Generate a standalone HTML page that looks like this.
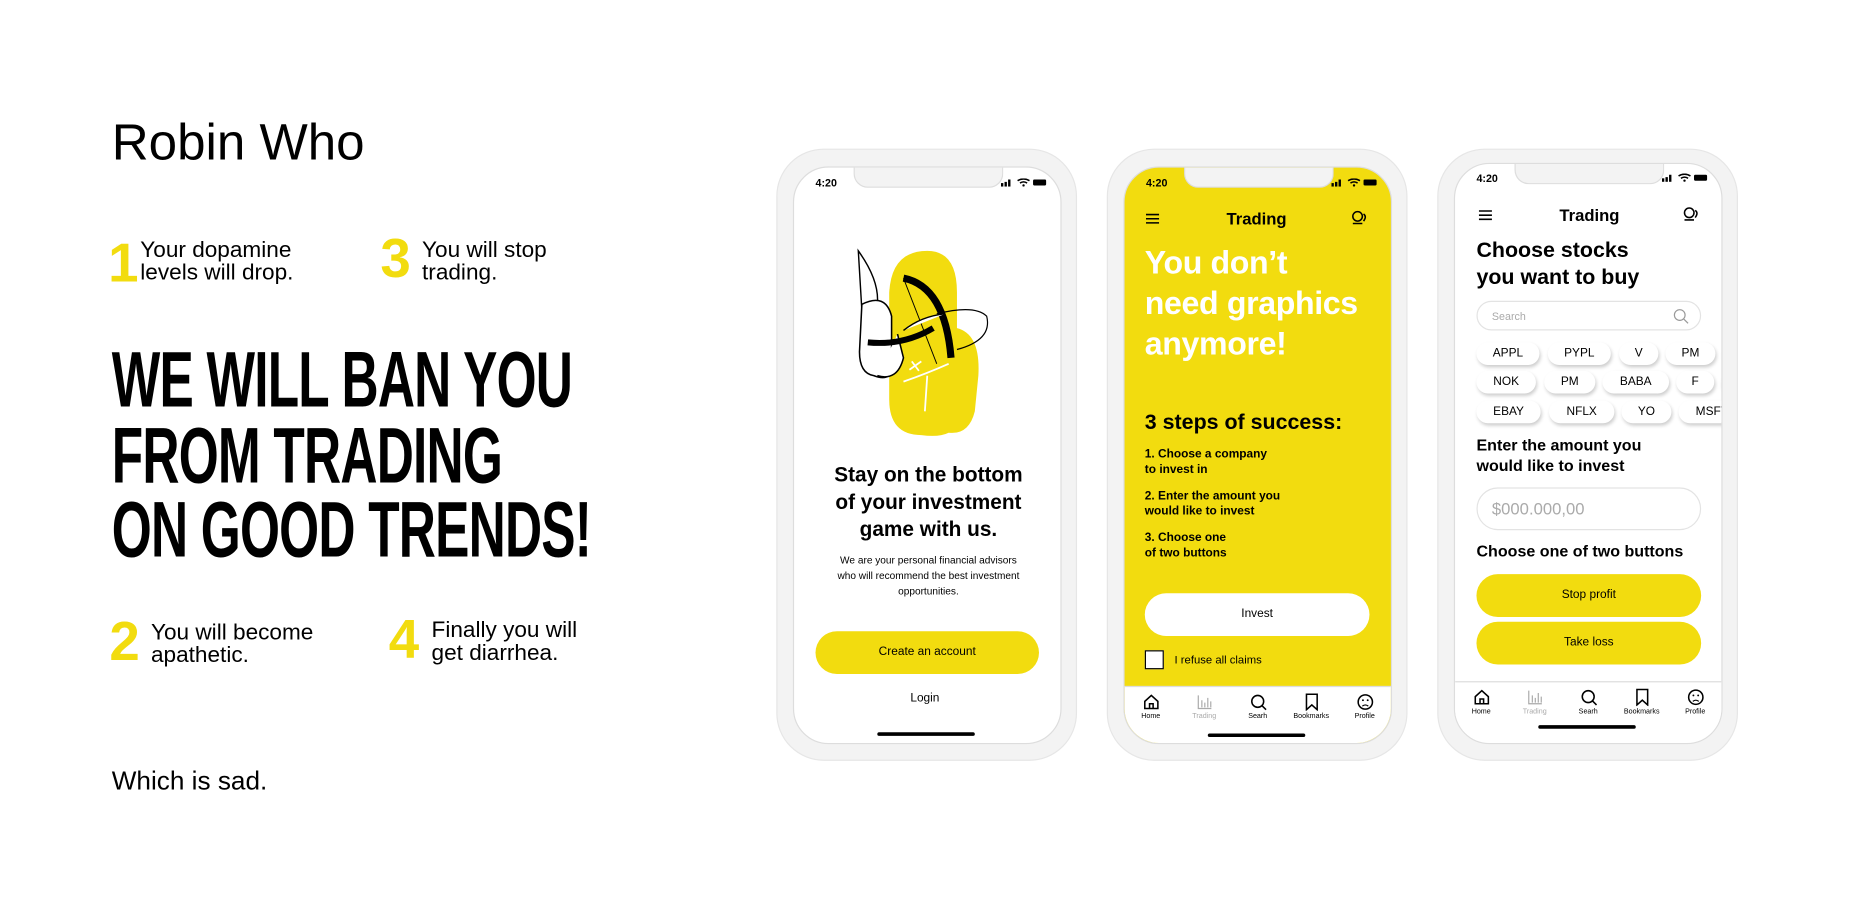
<!DOCTYPE html>
<html><head><meta charset="utf-8"><style>
*{margin:0;padding:0;box-sizing:border-box}
html,body{width:1864px;height:910px;overflow:hidden;background:#fff;font-family:"Liberation Sans",sans-serif;color:#000}
#w{position:absolute;left:0;top:0;width:1568px;height:766px;transform:scale(1.18878);transform-origin:0 0}
.a{position:absolute}
.num{position:absolute;color:#f2dc0f;font-weight:bold;font-size:46px;line-height:46px}
.it{position:absolute;font-size:19px;line-height:19px}
.hl{position:absolute;left:94px;font-weight:bold;font-size:66px;line-height:66px;transform-origin:0 0;transform:scaleX(.655);white-space:nowrap;letter-spacing:-1px}
.ph{position:absolute;width:253px;height:515px;border-radius:40px;background:#f3f3f3;border:1px solid #e6e6e6}
.sc{position:absolute;left:13px;top:14px;width:226px;height:486px;border-radius:30px;background:#fff;overflow:hidden;border:1px solid #ddd}
.notch{position:absolute;left:50px;top:-1px;width:126px;height:18px;background:#f3f3f3;border:1px solid #ddd;border-top:none;border-radius:0 0 12px 12px}
.tm{position:absolute;left:18px;top:8px;font-size:9px;font-weight:bold}
.st{position:absolute;right:10px;top:9px;width:40px;height:7px}
.hi{position:absolute;left:70px;bottom:6px;width:82px;height:3px;background:#000;border-radius:2px}
.btn{position:absolute;border-radius:18px;background:#f2dc0f;font-size:10px;text-align:center}
.tab{position:absolute;left:0;width:226px;height:50px;background:#fff;border-top:1px solid #ddd}
.tab div{position:absolute;top:5px;width:44px;text-align:center;font-size:6px;color:#000}
.tab svg{display:block;margin:0 auto 2px;width:15px;height:15px}
.chip{position:absolute;height:19px;border-radius:10px;background:#fff;box-shadow:1px 2px 3px rgba(0,0,0,.2);font-size:10px;text-align:center;line-height:19px}
</style></head><body><div id="w">
<div class="a" style="left:94px;top:98px;font-size:43px;line-height:44px">Robin Who</div>

<div class="num" style="left:91px;top:198px">1</div>
<div class="it" style="left:118px;top:201px">Your dopamine<br>levels will drop.</div>
<div class="num" style="left:320px;top:194px">3</div>
<div class="it" style="left:355px;top:201px">You will stop<br>trading.</div>

<div class="hl" style="top:286px">WE WILL BAN YOU</div>
<div class="hl" style="top:350px">FROM TRADING</div>
<div class="hl" style="top:412px">ON GOOD TRENDS!</div>

<div class="num" style="left:92px;top:516px">2</div>
<div class="it" style="left:127px;top:523px">You will become<br>apathetic.</div>
<div class="num" style="left:327px;top:514px">4</div>
<div class="it" style="left:363px;top:521px">Finally you will<br>get diarrhea.</div>

<div class="a" style="left:94px;top:644px;font-size:22px">Which is sad.</div>

<!-- phone 1 -->
<div class="ph" style="left:653px;top:125px">
<div class="sc">
<div class="notch"></div><div class="tm">4:20</div>
<svg class="st" viewBox="0 0 40 7"><rect x="0" y="4" width="2" height="3"/><rect x="3" y="3" width="2" height="4"/><rect x="6" y="1" width="2" height="6"/><path d="M14 2q5-3 10 0M16 4q3-2 6 0" stroke="#000" fill="none" stroke-width="1.3"/><circle cx="19" cy="6" r="1"/><rect x="27" y="1" width="11" height="5" rx="1"/></svg>
<svg class="a" style="left:52px;top:65px" width="130" height="165" viewBox="0 0 130 165">
<path d="M28 40 Q30 5 60 5 Q85 5 85 40 L85 70 Q105 75 103 110 L100 140 Q95 160 78 158 Q70 162 55 160 Q28 160 28 130 Z" fill="#f2dc0f"/>
<path d="M5 55 L2 5 Q20 30 18 50 Z" fill="#fff" stroke="#000" stroke-width="1.2"/>
<path d="M5 50 Q25 40 30 60 L30 105 Q28 115 15 110 Q3 108 3 90 Z" fill="#fff" stroke="#000" stroke-width="1.3"/>
<path d="M18 110 Q35 115 40 95 L35 75" fill="#fff" stroke="#000" stroke-width="1.3"/>
<path d="M10 82 Q40 85 65 70" stroke="#000" stroke-width="5" fill="none"/>
<path d="M40 28 Q75 35 80 95" stroke="#000" stroke-width="6" fill="none"/>
<path d="M40 28 L68 100" stroke="#000" stroke-width=".8"/>
<path d="M68 58 Q100 50 110 60 Q115 80 85 88" stroke="#000" stroke-width="1" fill="none"/>
<path d="M40 72 Q55 60 75 58" stroke="#000" stroke-width="1.2" fill="#fff"/>
<path d="M45 105 L55 98 M47 98 L53 106 M40 115 Q60 108 78 100 M60 110 L58 140" stroke="#fff" stroke-width="1.5" fill="none"/>
</svg>
<div class="a" style="left:0;width:226px;top:247px;text-align:center;font-size:17.5px;font-weight:bold;line-height:23px">Stay on the bottom<br>of your investment<br>game with us.</div>
<div class="a" style="left:0;width:226px;top:324px;text-align:center;font-size:8.5px;line-height:13px">We are your personal financial advisors<br>who will recommend the best investment<br>opportunities.</div>
<div class="btn" style="left:18px;top:390px;width:188px;height:36px;line-height:36px">Create an account</div>
<div class="a" style="left:0;width:220px;top:441px;text-align:center;font-size:10px">Login</div>
<div class="hi"></div>
</div></div>

<!-- phone 2 -->
<div class="ph" style="left:931px;top:125px">
<div class="sc" style="background:#f2dc0f">
<div class="notch"></div><div class="tm">4:20</div>
<svg class="st" viewBox="0 0 40 7"><rect x="0" y="4" width="2" height="3"/><rect x="3" y="3" width="2" height="4"/><rect x="6" y="1" width="2" height="6"/><path d="M14 2q5-3 10 0M16 4q3-2 6 0" stroke="#000" fill="none" stroke-width="1.3"/><circle cx="19" cy="6" r="1"/><rect x="27" y="1" width="11" height="5" rx="1"/></svg>
<svg class="a" style="left:18px;top:38px" width="12" height="10"><path d="M0 1.5h11M0 5h11M0 8.5h11" stroke="#000" stroke-width="1.3"/></svg>
<div class="a" style="left:0;width:222px;top:35px;text-align:center;font-size:14px;font-weight:bold">Trading</div>
<svg class="a" style="left:191px;top:36px" width="13" height="12" viewBox="0 0 13 12"><circle cx="5" cy="5" r="4" fill="none" stroke="#000" stroke-width="1.3"/><path d="M1 11h8M10 3q3 2 0 6" stroke="#000" fill="none" stroke-width="1.3"/></svg>
<div class="a" style="left:17px;top:63px;color:#fff;font-weight:bold;font-size:27px;line-height:34px;letter-spacing:-.3px">You don’t<br>need graphics<br>anymore!</div>
<div class="a" style="left:17px;top:204px;font-weight:bold;font-size:18px">3 steps of success:</div>
<div class="a" style="left:17px;top:236px;font-weight:bold;font-size:10px;line-height:12.5px">1. Choose a company<br>to invest in</div>
<div class="a" style="left:17px;top:271px;font-weight:bold;font-size:10px;line-height:12.5px">2. Enter the amount you<br>would like to invest</div>
<div class="a" style="left:17px;top:306px;font-weight:bold;font-size:10px;line-height:12.5px">3. Choose one<br>of two buttons</div>
<div class="btn" style="left:17px;top:358px;width:189px;height:36px;line-height:36px;background:#fff">Invest</div>
<div class="a" style="left:17px;top:406px;width:16px;height:16px;border:1px solid #000;background:#fff"></div>
<div class="a" style="left:42px;top:409px;font-size:9.5px">I refuse all claims</div>
<div class="tab" style="top:436px">
<div style="left:0"><svg viewBox="0 0 15 15"><path d="M2 7L7.5 2 13 7V13H2Z M6 13V9h3v4" fill="none" stroke="#000" stroke-width="1.3"/></svg>Home</div>
<div style="left:45px;color:#aaa"><svg viewBox="0 0 15 15"><path d="M2 2v11h11M5 12V6M7.5 12V8M10 12V4M12.5 12V7" fill="none" stroke="#aaa" stroke-width="1"/></svg>Trading</div>
<div style="left:90px"><svg viewBox="0 0 15 15"><circle cx="7" cy="7" r="5" fill="none" stroke="#000" stroke-width="1.3"/><path d="M10.5 10.5L14 14" stroke="#000" stroke-width="1.3"/></svg>Searh</div>
<div style="left:135px"><svg viewBox="0 0 15 15"><path d="M3 1h9v13l-4.5-4L3 14Z" fill="none" stroke="#000" stroke-width="1.3"/></svg>Bookmarks</div>
<div style="left:180px"><svg viewBox="0 0 15 15"><circle cx="7.5" cy="7.5" r="6" fill="none" stroke="#000" stroke-width="1.3"/><circle cx="5.5" cy="6" r=".8"/><circle cx="9.5" cy="6" r=".8"/><path d="M5 11q2.5-2 5 0" fill="none" stroke="#000"/></svg>Profile</div>
</div>
<div class="hi" style="bottom:5px"></div>
</div></div>

<!-- phone 3 -->
<div class="ph" style="left:1209px;top:125px">
<div class="sc" style="top:11px;height:489px">
<div class="notch"></div><div class="tm" style="top:7px">4:20</div>
<svg class="st" style="top:8px" viewBox="0 0 40 7"><rect x="0" y="4" width="2" height="3"/><rect x="3" y="3" width="2" height="4"/><rect x="6" y="1" width="2" height="6"/><path d="M14 2q5-3 10 0M16 4q3-2 6 0" stroke="#000" fill="none" stroke-width="1.3"/><circle cx="19" cy="6" r="1"/><rect x="27" y="1" width="11" height="5" rx="1"/></svg>
<svg class="a" style="left:20px;top:38px" width="12" height="10"><path d="M0 1.5h11M0 5h11M0 8.5h11" stroke="#000" stroke-width="1.3"/></svg>
<div class="a" style="left:0;width:226px;top:35px;text-align:center;font-size:14px;font-weight:bold">Trading</div>
<svg class="a" style="left:192px;top:36px" width="13" height="12" viewBox="0 0 13 12"><circle cx="5" cy="5" r="4" fill="none" stroke="#000" stroke-width="1.3"/><path d="M1 11h8M10 3q3 2 0 6" stroke="#000" fill="none" stroke-width="1.3"/></svg>
<div class="a" style="left:18px;top:61px;font-weight:bold;font-size:18px;line-height:23px">Choose stocks<br>you want to buy</div>
<div class="a" style="left:18px;top:115px;width:189px;height:25px;border:1px solid #e3e3e3;border-radius:13px;font-size:9px;color:#aaa;padding:7px 12px">Search</div>
<svg class="a" style="left:183px;top:121px" width="14" height="14"><circle cx="6" cy="6" r="4.5" fill="none" stroke="#999" stroke-width="1"/><path d="M9.5 9.5L13 13" stroke="#999"/></svg>
<div class="chip" style="left:18px;top:150px;width:53px">APPL</div>
<div class="chip" style="left:78px;top:150px;width:53px">PYPL</div>
<div class="chip" style="left:138px;top:150px;width:33px">V</div>
<div class="chip" style="left:177px;top:150px;width:42px">PM</div>
<div class="chip" style="left:225px;top:150px;width:40px;text-align:left;padding-left:13px">TWTR</div>
<div class="chip" style="left:18px;top:174px;width:50px">NOK</div>
<div class="chip" style="left:75px;top:174px;width:43px">PM</div>
<div class="chip" style="left:124px;top:174px;width:56px">BABA</div>
<div class="chip" style="left:186px;top:174px;width:32px">F</div>
<div class="chip" style="left:224px;top:174px;width:40px;text-align:left;padding-left:12px">DAL</div>
<div class="chip" style="left:18px;top:199px;width:54px">EBAY</div>
<div class="chip" style="left:79px;top:199px;width:55px">NFLX</div>
<div class="chip" style="left:140px;top:199px;width:42px">YO</div>
<div class="chip" style="left:188px;top:199px;width:56px">MSFT</div>
<div class="chip" style="left:250px;top:199px;width:30px"></div>
<div class="a" style="left:18px;top:228px;font-weight:bold;font-size:13.5px;line-height:17px">Enter the amount you<br>would like to invest</div>
<div class="a" style="left:18px;top:272px;width:189px;height:36px;border:1px solid #e3e3e3;border-radius:18px;font-size:14px;color:#aaa;padding:9px 12px">$000.000,00</div>
<div class="a" style="left:18px;top:318px;font-weight:bold;font-size:13.5px">Choose one of two buttons</div>
<div class="btn" style="left:18px;top:345px;width:189px;height:36px;line-height:36px">Stop profit</div>
<div class="btn" style="left:18px;top:385px;width:189px;height:36px;line-height:36px">Take loss</div>
<div class="tab" style="top:435px">
<div style="left:0"><svg viewBox="0 0 15 15"><path d="M2 7L7.5 2 13 7V13H2Z M6 13V9h3v4" fill="none" stroke="#000" stroke-width="1.3"/></svg>Home</div>
<div style="left:45px;color:#aaa"><svg viewBox="0 0 15 15"><path d="M2 2v11h11M5 12V6M7.5 12V8M10 12V4M12.5 12V7" fill="none" stroke="#aaa" stroke-width="1"/></svg>Trading</div>
<div style="left:90px"><svg viewBox="0 0 15 15"><circle cx="7" cy="7" r="5" fill="none" stroke="#000" stroke-width="1.3"/><path d="M10.5 10.5L14 14" stroke="#000" stroke-width="1.3"/></svg>Searh</div>
<div style="left:135px"><svg viewBox="0 0 15 15"><path d="M3 1h9v13l-4.5-4L3 14Z" fill="none" stroke="#000" stroke-width="1.3"/></svg>Bookmarks</div>
<div style="left:180px"><svg viewBox="0 0 15 15"><circle cx="7.5" cy="7.5" r="6" fill="none" stroke="#000" stroke-width="1.3"/><circle cx="5.5" cy="6" r=".8"/><circle cx="9.5" cy="6" r=".8"/><path d="M5 11q2.5-2 5 0" fill="none" stroke="#000"/></svg>Profile</div>
</div>
<div class="hi" style="bottom:12px"></div>
</div></div>
</div></body></html>
